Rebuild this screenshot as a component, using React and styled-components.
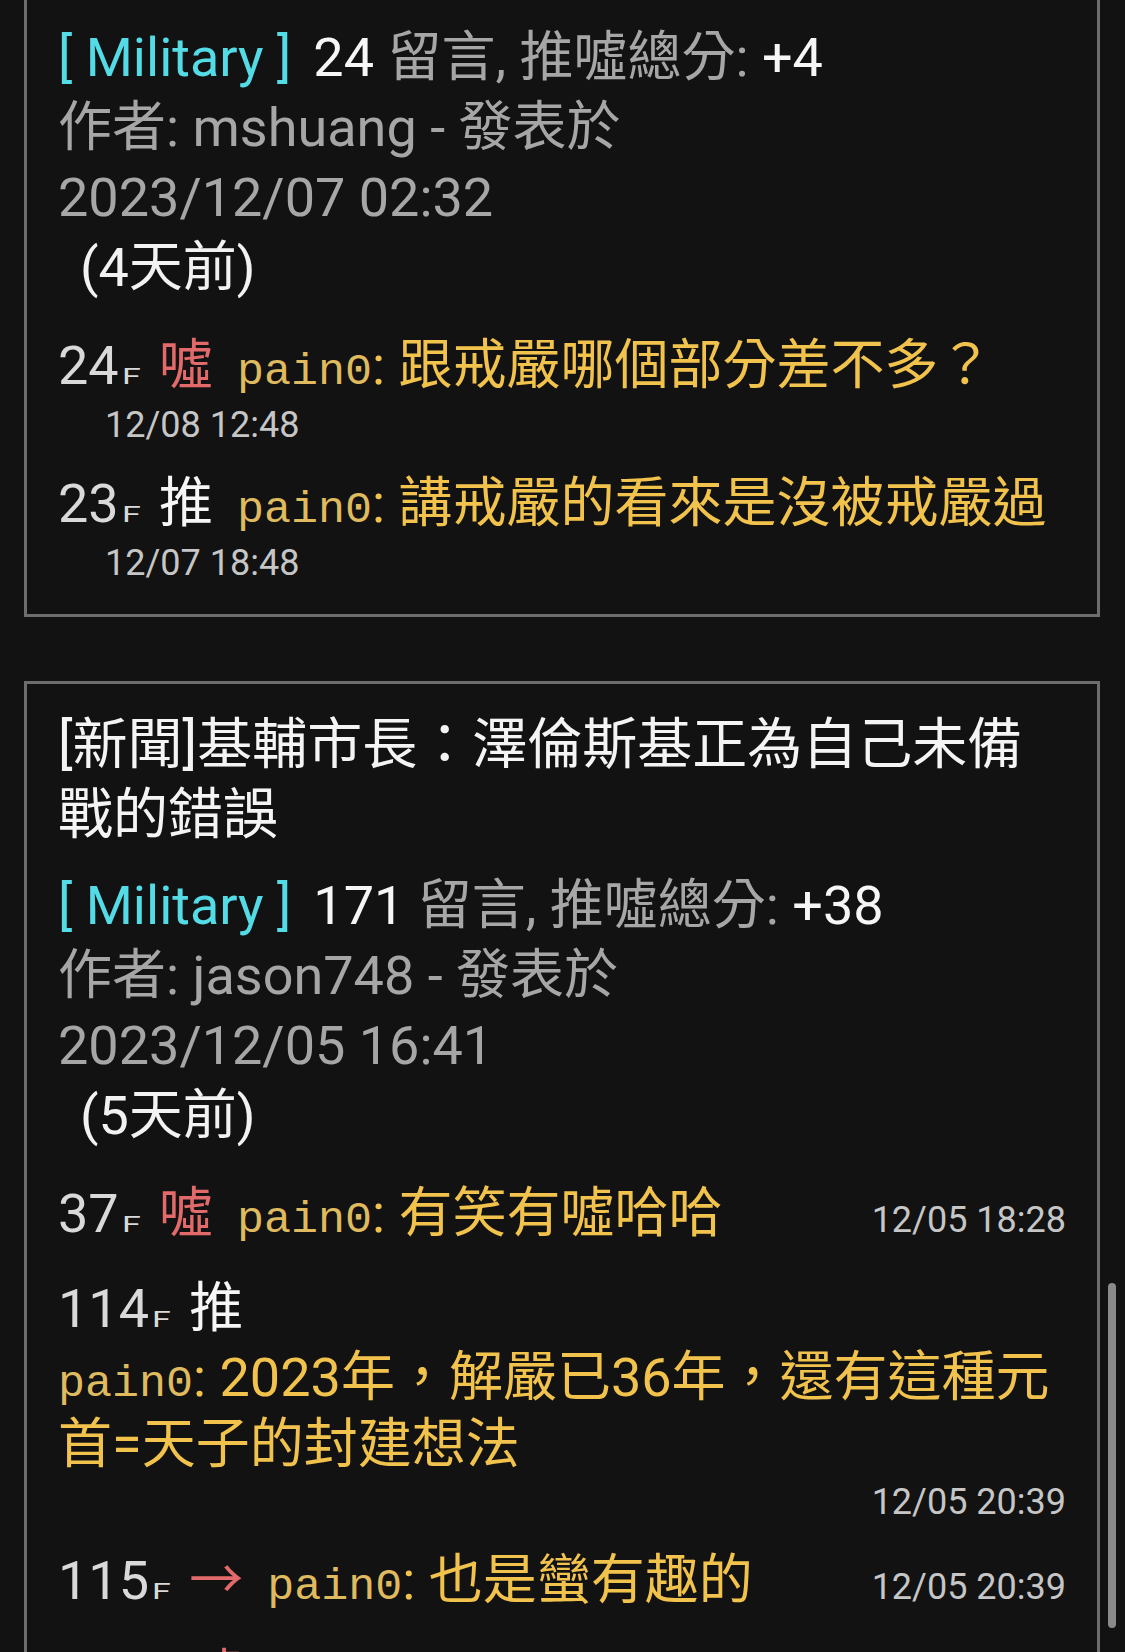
import React from "react";
import styled, { createGlobalStyle } from "styled-components";

const GlobalStyle = createGlobalStyle`
  html, body {
    margin: 0;
    padding: 0;
    background: #121212;
  }
  body {
    font-family: Roboto, "Noto Sans CJK TC", sans-serif;
  }
`;

const Screen = styled.div`
  position: relative;
  width: 1125px;
  height: 1652px;
  overflow: hidden;
  box-sizing: border-box;
  padding: 0 25px 0 24px;
  background: #121212;
  font-size: 54px;
  line-height: 70px;
`;

const Feed = styled.div`
  display: flex;
  flex-direction: column;
  gap: 64px;
`;

const Card = styled.article`
  border: 3px solid #6d6d6d;
  border-top: ${(p) => (p.$cut ? "none" : "3px solid #6d6d6d")};
  padding: ${(p) => (p.$cut ? "23px" : "25px")} 31px 27px 31px;
`;

const Title = styled.h2`
  margin: 0 0 22px;
  font-size: 55px;
  line-height: 70px;
  font-weight: 400;
  color: #f4f4f4;
`;

const Meta = styled.div`
  color: #a6a6a6;
`;

const Board = styled.span`
  color: #53dbe6;
  margin-right: 22px;
`;

const Bright = styled.span`
  color: #f6f6f6;
`;

const Ago = styled.div`
  color: #f2f2f2;
  padding-left: 22px;
`;

const Comments = styled.div`
  display: flex;
  flex-direction: column;
  gap: 20px;
  margin-top: 28px;
`;

const Row = styled.div`
  display: flex;
  align-items: baseline;
  justify-content: space-between;
  padding-bottom: 5px;
`;

const Line = styled.div``;

const Floor = styled.span`
  color: #d9d9d9;
`;

const Unit = styled.span`
  display: inline-block;
  font-size: 22px;
  line-height: 1;
  margin: 0 8px 0 3px;
  transform: scaleX(1.55);
  transform-origin: left bottom;
`;

const Tag = styled.span`
  font-family: "Noto Sans CJK TC", sans-serif;
  color: ${(p) => p.$tone};
  line-height: 1;
  margin: 0 24px 0 17px;
`;

const User = styled.span`
  font-family: "Liberation Mono", monospace;
  font-size: 45px;
  line-height: 1;
  color: #dfba5e;
`;

const Said = styled.span`
  color: #f1c24c;
`;

const Body = styled.div`
  line-height: 67px;
  color: #f1c24c;
`;

const Time = styled.div`
  font-size: 36px;
  line-height: 48px;
  color: #c6c6c6;
  padding-left: ${(p) => (p.$indent ? "47px" : "0")};
  text-align: ${(p) => (p.$right ? "right" : "left")};
  white-space: nowrap;
`;

const Thumb = styled.div`
  position: absolute;
  right: 9px;
  top: 1283px;
  width: 8px;
  height: 345px;
  border-radius: 4px;
  background: #8a8a8a;
`;

const tones = { "噓": "#e26a6a", "→": "#e26a6a", "推": "#f6f6f6" };

const posts = [
  {
    id: "p1",
    cut: true,
    board: "Military",
    count: 24,
    score: "+4",
    author: "mshuang",
    date: "2023/12/07 02:32",
    ago: "4天前",
    comments: [
      { floor: 24, tag: "噓", user: "pain0", text: "跟戒嚴哪個部分差不多？", time: "12/08 12:48", layout: "below" },
      { floor: 23, tag: "推", user: "pain0", text: "講戒嚴的看來是沒被戒嚴過", time: "12/07 18:48", layout: "below" },
    ],
  },
  {
    id: "p2",
    title: "[新聞]基輔市長：澤倫斯基正為自己未備戰的錯誤",
    board: "Military",
    count: 171,
    score: "+38",
    author: "jason748",
    date: "2023/12/05 16:41",
    ago: "5天前",
    comments: [
      { floor: 37, tag: "噓", user: "pain0", text: "有笑有噓哈哈", time: "12/05 18:28", layout: "side" },
      { floor: 114, tag: "推", user: "pain0", text: "2023年，解嚴已36年，還有這種元首=天子的封建想法", time: "12/05 20:39", layout: "wrap" },
      { floor: 115, tag: "→", user: "pain0", text: "也是蠻有趣的", time: "12/05 20:39", layout: "side" },
      { floor: 116, tag: "噓", user: "pain0", text: "……", time: "12/05 20:41", layout: "wrap" },
    ],
  },
];

function Head({ c }) {
  return (
    <>
      <Floor>
        {c.floor}
        <Unit>F</Unit>
      </Floor>
      <Tag $tone={tones[c.tag]}>{c.tag}</Tag>
    </>
  );
}

function Speech({ c }) {
  return (
    <>
      <User>{c.user}</User>
      <Said>: {c.text}</Said>
    </>
  );
}

function Comment({ c }) {
  if (c.layout === "side") {
    return (
      <Row>
        <Line>
          <Head c={c} />
          <Speech c={c} />
        </Line>
        <Time>{c.time}</Time>
      </Row>
    );
  }
  if (c.layout === "wrap") {
    return (
      <div>
        <Line>
          <Head c={c} />
        </Line>
        <Body>
          <Speech c={c} />
        </Body>
        <Time $right>{c.time}</Time>
      </div>
    );
  }
  return (
    <div>
      <Line>
        <Head c={c} />
        <Speech c={c} />
      </Line>
      <Time $indent>{c.time}</Time>
    </div>
  );
}

function Post({ post }) {
  return (
    <Card $cut={post.cut}>
      {post.title && <Title>{post.title}</Title>}
      <Meta>
        <div>
          <Board>[ {post.board} ]</Board>
          <Bright>{post.count}</Bright> 留言, 推噓總分: <Bright>{post.score}</Bright>
        </div>
        <div>作者: {post.author} - 發表於</div>
        <div>{post.date}</div>
        <Ago>({post.ago})</Ago>
      </Meta>
      <Comments>
        {post.comments.map((c) => (
          <Comment key={c.floor} c={c} />
        ))}
      </Comments>
    </Card>
  );
}

export default function App() {
  return (
    <>
      <GlobalStyle />
      <Screen>
        <Feed>
          {posts.map((p) => (
            <Post key={p.id} post={p} />
          ))}
        </Feed>
        <Thumb />
      </Screen>
    </>
  );
}
